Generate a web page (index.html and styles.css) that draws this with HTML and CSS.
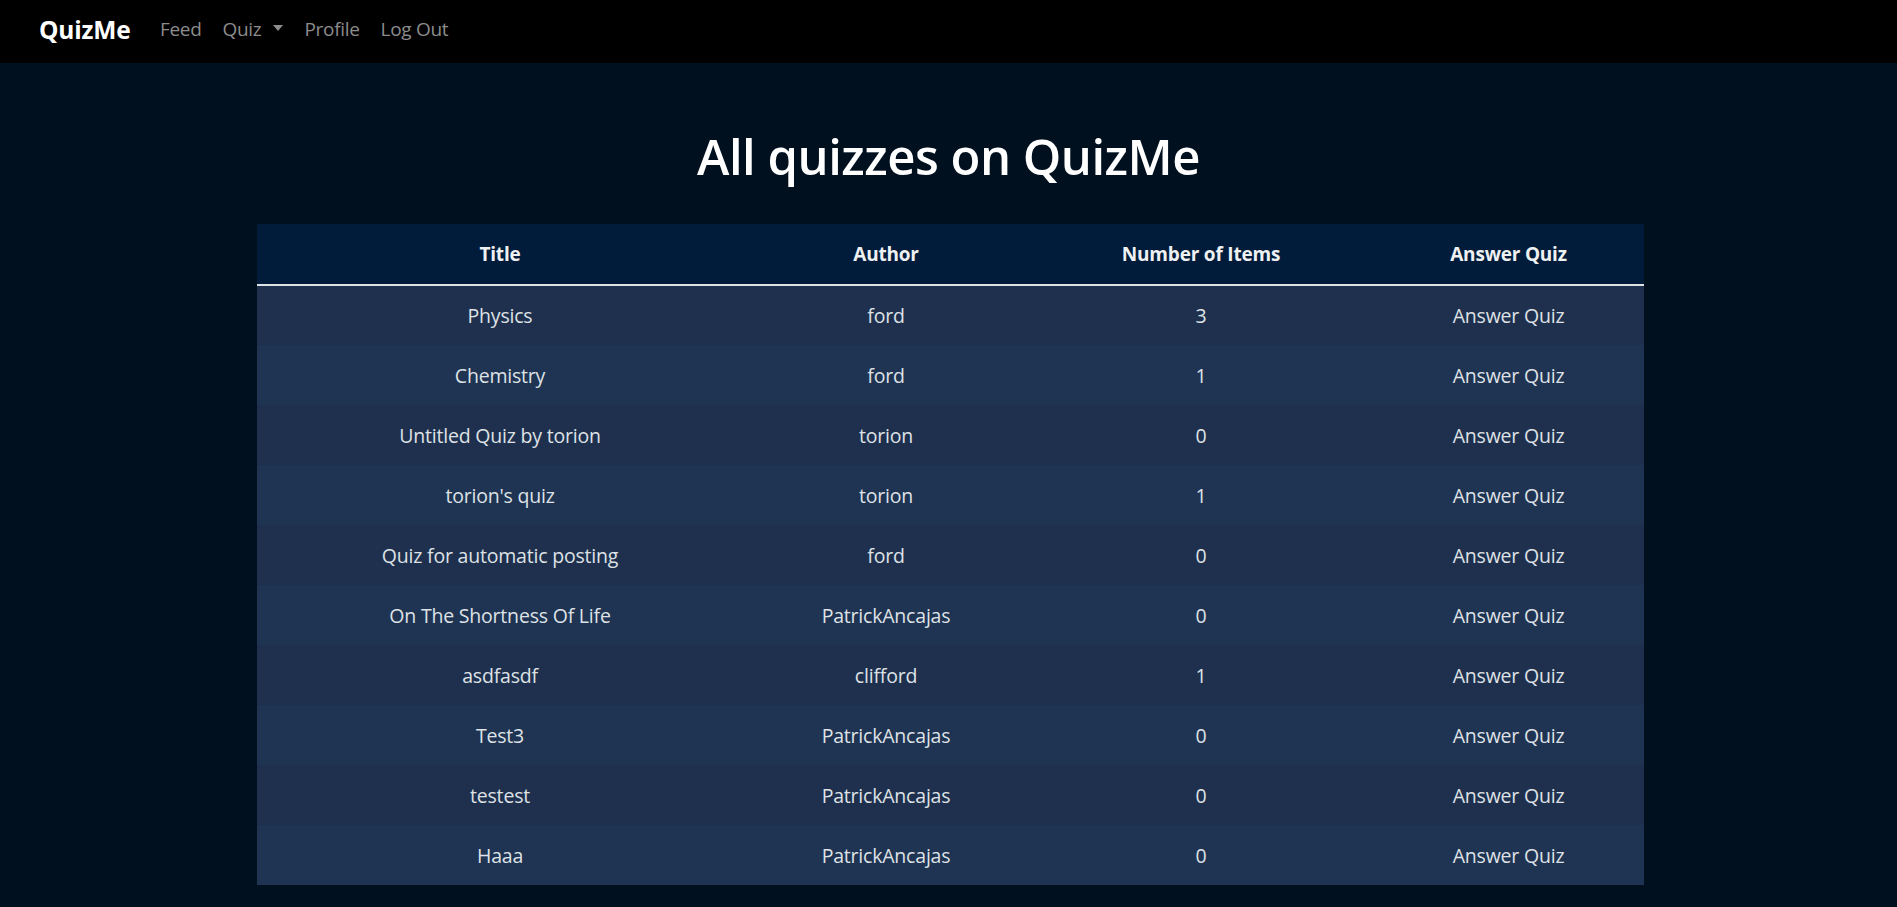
FILE: index.html
```html
<!DOCTYPE html>
<html lang="en">
<head>
<meta charset="utf-8">
<title>QuizMe</title>
<link rel="stylesheet" href="styles.css">
</head>
<body>
<nav class="navbar">
  <a class="brand" href="#">QuizMe</a>
  <ul class="nav">
    <li><a class="nav-link" href="#">Feed</a></li>
    <li><a class="nav-link dropdown" href="#">Quiz<span class="caret"></span></a></li>
    <li><a class="nav-link" href="#">Profile</a></li>
    <li><a class="nav-link" href="#">Log Out</a></li>
  </ul>
</nav>
<main class="main">
  <h1 class="page-title">All quizzes on QuizMe</h1>
  <table class="quiz-table">
    <colgroup>
      <col class="c-title"><col class="c-author"><col class="c-items"><col class="c-answer">
    </colgroup>
    <thead>
      <tr><th>Title</th><th>Author</th><th>Number of Items</th><th>Answer Quiz</th></tr>
    </thead>
    <tbody>
      <tr><td>Physics</td><td>ford</td><td>3</td><td><a href="#">Answer Quiz</a></td></tr>
      <tr><td>Chemistry</td><td>ford</td><td>1</td><td><a href="#">Answer Quiz</a></td></tr>
      <tr><td>Untitled Quiz by torion</td><td>torion</td><td>0</td><td><a href="#">Answer Quiz</a></td></tr>
      <tr><td>torion's quiz</td><td>torion</td><td>1</td><td><a href="#">Answer Quiz</a></td></tr>
      <tr><td>Quiz for automatic posting</td><td>ford</td><td>0</td><td><a href="#">Answer Quiz</a></td></tr>
      <tr><td>On The Shortness Of Life</td><td>PatrickAncajas</td><td>0</td><td><a href="#">Answer Quiz</a></td></tr>
      <tr><td>asdfasdf</td><td>clifford</td><td>1</td><td><a href="#">Answer Quiz</a></td></tr>
      <tr><td>Test3</td><td>PatrickAncajas</td><td>0</td><td><a href="#">Answer Quiz</a></td></tr>
      <tr><td>testest</td><td>PatrickAncajas</td><td>0</td><td><a href="#">Answer Quiz</a></td></tr>
      <tr><td>Haaa</td><td>PatrickAncajas</td><td>0</td><td><a href="#">Answer Quiz</a></td></tr>
    </tbody>
  </table>
</main>
</body>
</html>
```
FILE: styles.css
```css
* { box-sizing: border-box; }
html, body {
  margin: 0;
  padding: 0;
}
body {
  background: #00101f;
  color: #dee2e6;
  font-family: "Open Sans", "Noto Sans", sans-serif;
  font-size: 19.5px;
  overflow: hidden;
}
a { text-decoration: none; color: inherit; }

.navbar {
  height: 63px;
  background: #000;
  display: flex;
  align-items: center;
  padding: 0 0 5px 39px;
}
.brand {
  color: #fff;
  font-weight: 700;
  font-size: 24.5px;
  margin-right: 19px;
  letter-spacing: -0.2px;
}
.nav {
  list-style: none;
  display: flex;
  margin: 0;
  padding: 0;
}
.nav-link {
  display: flex;
  align-items: center;
  color: #8c8c8c;
  font-size: 19px;
  padding: 0 10.5px;
  letter-spacing: -0.3px;
}
.caret {
  display: inline-block;
  margin-left: 12px;
  width: 0;
  height: 0;
  border-top: 6px solid #8c8c8c;
  border-left: 5.5px solid transparent;
  border-right: 5.5px solid transparent;
  margin-top: -2px;
}

.main {
  padding-top: 63px;
}
.page-title {
  margin: 0 0 38px;
  text-align: center;
  font-size: 49px;
  line-height: 60px;
  font-weight: 600;
  color: #fff;
  letter-spacing: -0.5px;
}
.quiz-table {
  width: 1387px;
  margin: 0 auto 0 257px;
  border-collapse: collapse;
  table-layout: fixed;
  text-align: center;
}
.c-title { width: 486px; }
.c-author { width: 286px; }
.c-items { width: 344px; }
.c-answer { width: 271px; }
.quiz-table th {
  background: #001c3a;
  color: #eef0f2;
  font-weight: 700;
  font-size: 19px;
  height: 61px;
  padding: 0 8px;
  border-bottom: 2px solid #dee2e6;
  letter-spacing: -0.2px;
}
.quiz-table td {
  height: 60px;
  padding: 0 8px;
  background: #1e304d;
  color: #dee2e6;
  letter-spacing: -0.2px;
}
.quiz-table tbody tr:nth-child(even) td {
  background: #1f3352;
}
```
